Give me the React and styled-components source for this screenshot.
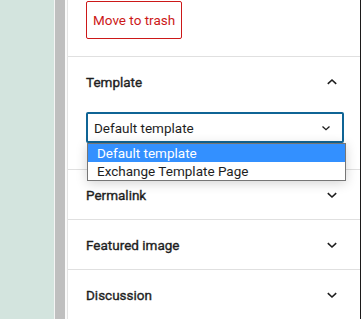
import React from "react";
import styled, { createGlobalStyle } from "styled-components";

const GlobalStyle = createGlobalStyle`
  html, body {
    margin: 0;
    padding: 0;
    background: #fff;
  }
  body {
    font-family: Roboto, "Liberation Sans", sans-serif;
    color: #1e1e1e;
  }
`;

const Screen = styled.div`
  display: flex;
  width: 361px;
  height: 319px;
  overflow: hidden;
`;

const Canvas = styled.div`
  width: 54px;
  flex-shrink: 0;
  background: #d3e4de;
  border-right: 1px solid #f4f4f4;
`;

const Scrollbar = styled.div`
  width: 10px;
  flex-shrink: 0;
  background: #bfbfbf;
  border-right: 2px solid #fbfbfb;
`;

const Sidebar = styled.div`
  flex: 1;
  display: flex;
  flex-direction: column;
  border-left: 1px solid #e4e4e4;
  border-right: 1px solid #1c1a1a;
  background: #fff;
`;

const TopSection = styled.div`
  padding: 1px 16px 17px 18px;
  border-bottom: 1px solid #e0e0e0;
`;

const TrashButton = styled.button`
  height: 38px;
  padding: 0 6px;
  background: #fff;
  border: 1px solid #cc1818;
  border-radius: 2px;
  color: #cc1818;
  font-family: Roboto, "Liberation Sans", sans-serif;
  font-size: 13.5px;
`;

const Panel = styled.div`
  position: relative;
  border-bottom: 1px solid #e0e0e0;
  padding: ${(p) => (p.$open ? "0 16px 26px 18px" : "0 16px 0 18px")};
`;

const PanelHeader = styled.div`
  height: 49px;
  display: flex;
  align-items: center;
  justify-content: space-between;
  font-size: 13.5px;
  font-weight: 400;
  -webkit-text-stroke: 0.35px #1e1e1e;
  padding-right: 6px;
  box-sizing: border-box;
`;

const SelectWrap = styled.div`
  position: relative;
  margin-top: 6px;
`;

const SelectBox = styled.div`
  height: 31px;
  box-sizing: border-box;
  border: 2px solid #0f6495;
  border-radius: 2px;
  display: flex;
  align-items: center;
  justify-content: space-between;
  padding: 0 11px 0 6px;
  font-size: 13.5px;
`;

const OptionList = styled.div`
  position: absolute;
  left: 1px;
  right: -2px;
  top: 31px;
  z-index: 2;
  background: #fff;
  border: 1px solid #767676;
  box-shadow: 0 2px 12px rgba(0, 0, 0, 0.18);
  display: flex;
  flex-direction: column;
`;

const Option = styled.div`
  height: 18px;
  line-height: 18px;
  padding: 0 9px;
  font-size: 13.5px;
  background: ${(p) => (p.$active ? "#3390ff" : "transparent")};
  color: ${(p) => (p.$active ? "#fff" : "#1e1e1e")};
`;

const Chevron = ({ up, size = 12 }) => (
  <svg width={size} height={size} viewBox="0 0 12 12" fill="none">
    <path
      d={up ? "M1.8 7.8L6 4L10.2 7.8" : "M1.8 4.2L6 8L10.2 4.2"}
      stroke="#1e1e1e"
      strokeWidth="1.6"
    />
  </svg>
);

const ClosedPanel = ({ title }) => (
  <Panel>
    <PanelHeader>
      {title}
      <Chevron />
    </PanelHeader>
  </Panel>
);

export default function App() {
  return (
    <Screen>
      <GlobalStyle />
      <Canvas />
      <Scrollbar />
      <Sidebar>
        <TopSection>
          <TrashButton>Move to trash</TrashButton>
        </TopSection>
        <Panel $open>
          <PanelHeader>
            Template
            <Chevron up />
          </PanelHeader>
          <SelectWrap>
            <SelectBox>
              Default template
              <Chevron size={10} />
            </SelectBox>
            <OptionList>
              <Option $active>Default template</Option>
              <Option>Exchange Template Page</Option>
            </OptionList>
          </SelectWrap>
        </Panel>
        <ClosedPanel title="Permalink" />
        <ClosedPanel title="Featured image" />
        <ClosedPanel title="Discussion" />
      </Sidebar>
    </Screen>
  );
}
